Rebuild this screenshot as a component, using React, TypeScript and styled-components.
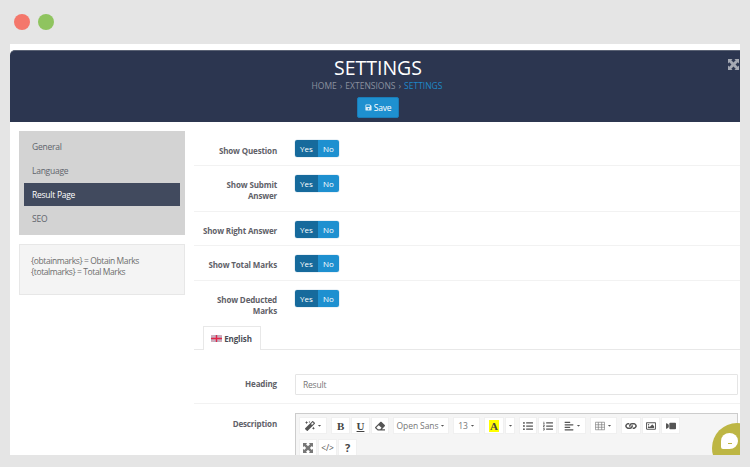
import React from 'react';
import styled, { createGlobalStyle } from 'styled-components';
import {
  FaMagic, FaEraser, FaListUl, FaListOl, FaAlignLeft, FaLink,
  FaRegImage, FaVideo, FaSave, FaCaretDown,
} from 'react-icons/fa';

const Global = createGlobalStyle`
  html, body { margin: 0; padding: 0; height: 467px; overflow: hidden; background: #e5e5e5; }
  body { font-family: "Open Sans", "Liberation Sans", sans-serif; }
  * { box-sizing: border-box; }
`;
const Page = styled.div`width: 750px; height: 467px; display: flex; flex-direction: column; padding: 14px 10px 12px;`;
const Lights = styled.div`display: flex; gap: 8px; height: 30px; padding-left: 4px; flex: none;`;
const Light = styled.span<{ $c: string }>`width: 16px; height: 16px; border-radius: 50%; background: ${p => p.$c};`;
const Frame = styled.div`position: relative; flex: 1; min-height: 0; background: #fff; overflow: hidden; padding-top: 6px;`;
const Header = styled.header`
  position: relative; height: 72px; padding-left: 6px; background: #2c3650; border-top: 1px solid #5a6274; border-top-left-radius: 5px;
  display: flex; flex-direction: column; align-items: center; color: #fff;
`;
const Title = styled.h1`margin: 4px 0 0; font-size: 19.5px; font-weight: 400; line-height: 25px;`;
const Crumbs = styled.div`font-size: 8.5px; line-height: 11px; color: #8b919f; display: flex; gap: 3px; margin-right: 2px;`;
const Current = styled.span`color: #1e88c8;`;
const SaveBtn = styled.button`
  margin-top: 6px; width: 42px; height: 21px; padding: 0; border: 1px solid #1a7cb8; border-radius: 2px; background: #1e90d0; color: #fff;
  font: 500 8.5px "Open Sans", sans-serif; letter-spacing: -.2px; display: flex; align-items: center; justify-content: center; gap: 2px;
  svg { width: 7px; height: 7px; opacity: .85; }
`;
const Expand = styled.span`position: absolute; top: 8px; right: 1px; color: #a5a9b3; display: flex;`;
const Body = styled.div`display: flex; padding: 9px 0 0 9px; gap: 9px;`;
const Side = styled.aside`width: 166px; flex: none; display: flex; flex-direction: column; gap: 9px;`;
const Nav = styled.nav`background: #d3d3d3; padding: 4px 5px 0; height: 104px; display: flex; flex-direction: column;`;
const NavItem = styled.div<{ $active?: boolean }>`
  height: 24px; padding-left: 8px; font-size: 8.5px; letter-spacing: -.25px; display: flex; align-items: center; border-bottom: 1px solid transparent; background-clip: padding-box;
  color: ${p => (p.$active ? '#fff' : '#60646c')};
  background-color: ${p => (p.$active ? '#414a5e' : 'transparent')};
`;
const Info = styled.div`height: 51px; background: #f4f4f4; border: 1px solid #e7e7e7; padding: 10px 11px; font-size: 8.5px; letter-spacing: -.4px; line-height: 11px; color: #6e6e6e;`;
const Main = styled.main`flex: 1; min-width: 0; display: flex; flex-direction: column;`;
const Row = styled.div<{ $h: number; $last?: boolean; $pad?: number }>`
  height: ${p => p.$h}px; padding-top: ${p => p.$pad ?? 9}px; display: flex; gap: 18px; align-items: flex-start; flex: none;
  border-bottom: ${p => (p.$last ? 'none' : '1px solid #f2f2f2')};
`;
const Label = styled.label<{ $top?: number }>`
  width: 83px; padding-left: 8px; flex: none; text-align: right; font-size: 8px; font-weight: 700; letter-spacing: -.15px; line-height: 11px; color: #5f6168; margin-top: ${p => p.$top ?? 4}px;
`;
const Toggle = styled.div`display: flex; height: 17px; width: 44px; border-radius: 2px; overflow: hidden; flex: none; box-shadow: 0 0 0 .5px #d8e6ef;`;
const Opt = styled.span<{ $on?: boolean }>`
  flex: ${p => (p.$on ? '0 0 23px' : 1)}; display: flex; align-items: center; justify-content: center; font-size: 8px; color: #fff;
  background: ${p => (p.$on ? '#166a9c' : '#1e90d0')};
`;
const Tabs = styled.div`height: 24px; margin: 10px 0 0; padding-left: 9px; border-bottom: 1px solid #e8e8e8; display: flex; flex: none;`;
const Tab = styled.div`
  width: 58px; height: 24px; padding-right: 1px; background: #fff; border: 1px solid #e8e8e8; border-bottom: none; display: flex; align-items: center; justify-content: center; gap: 2px;
  font-size: 8px; font-weight: 700; letter-spacing: -.1px; color: #4b4d55;
`;
const Input = styled.div`flex: 1; margin-right: 2px; height: 21px; border: 1px solid #e5e5e5; font-size: 8.5px; letter-spacing: -.2px; color: #777; padding-left: 7px; display: flex; align-items: center; border-radius: 1px;`;
const Editor = styled.div`flex: 1; margin-right: 2px; height: 60px; background: #f5f5f5; border: 1px solid #ccc; padding: 3px 0 0 3px; display: flex; flex-wrap: wrap; align-content: flex-start; column-gap: 4px; row-gap: 5px;`;
const Group = styled.div`display: flex; gap: 1px;`;
const Tool = styled.span<{ $w: number }>`
  width: ${p => p.$w}px; height: 17px; background: #fff; border: 1px solid #f0f0f0; display: flex; align-items: center; justify-content: center; gap: 2px; color: #555;
  font-size: 8.5px; letter-spacing: -.1px; svg { width: 10px; height: 10px; } svg.c { width: 5px; height: 5px; }
`;
const Muted = styled.span`color: #777;`;
const Serif = styled.span<{ $u?: boolean }>`
  font: 700 11px "Liberation Serif", serif; color: #444; text-decoration: ${p => (p.$u ? 'underline' : 'none')};
`;
const Heavy = styled.span`font-size: 11px; font-weight: 700; color: #444;`;
const HL = styled.span`background: #ffff00; width: 10px; height: 12px; font: 700 11px "Liberation Serif", serif; text-align: center; line-height: 12px; color: #444;`;
const LinkIcon = styled(FaLink)`transform: rotate(45deg);`;
const VideoIcon = styled(FaVideo)`transform: scaleX(-1);`;
const SoftIcon = styled.span`color: #777; display: flex;`;
const Chat = styled.div`position: absolute; left: 702px; top: 379px; width: 50px; height: 50px; border-radius: 50%; background: #bdb644;`;
const Speech = styled.div`
  position: absolute; left: 9px; top: 10px; width: 17px; height: 16px; background: #fff; border-radius: 50% 50% 50% 2px;
  &::after { content: ''; position: absolute; left: 7px; top: 10px; width: 4px; height: 1px; background: #bdb644; }
`;

const Flag = () => (
  <svg width="11" height="7" viewBox="0 0 11 7" aria-hidden>
    <rect width="11" height="7" fill="#b9b3c4" />
    <path d="M0 0L11 7M11 0L0 7" stroke="#e8a9b5" strokeWidth="1" />
    <path d="M5.5 0V7M0 3.5H11" stroke="#e0264a" strokeWidth="1.4" />
  </svg>
);
const ArrowsAlt = ({ size }: { size: number }) => (
  <svg width={size} height={size} viewBox="0 0 12 12" fill="currentColor" aria-hidden>
    <path d="M0 0H5L3.6 1.4L6 3.8L8.4 1.4L7 0H12V5L10.6 3.6L8.2 6L10.6 8.4L12 7V12H7L8.4 10.6L6 8.2L3.6 10.6L5 12H0V7L1.4 8.4L3.8 6L1.4 3.6L0 5Z" />
  </svg>
);
const Grid = () => (
  <svg viewBox="0 0 12 10" fill="none" stroke="#777" strokeWidth="0.8" aria-hidden>
    <path d="M.5.5H11.5V9.5H.5ZM.5 3.5H11.5M.5 6.5H11.5M4 .5V9.5M8 .5V9.5" />
  </svg>
);
const YesNo = () => (
  <Toggle>
    <Opt $on>Yes</Opt>
    <Opt>No</Opt>
  </Toggle>
);
const Caret = () => <FaCaretDown className="c" />;

export default function App() {
  return (
    <Page>
      <Global />
      <Lights>
        <Light $c="#f4776b" />
        <Light $c="#8fc45f" />
      </Lights>
      <Frame>
        <Header>
          <Title>SETTINGS</Title>
          <Crumbs>
            <span>HOME</span><span>›</span><span>EXTENSIONS</span><span>›</span><Current>SETTINGS</Current>
          </Crumbs>
          <SaveBtn><FaSave />Save</SaveBtn>
          <Expand><ArrowsAlt size={11} /></Expand>
        </Header>
        <Body>
          <Side>
            <Nav>
              <NavItem>General</NavItem>
              <NavItem>Language</NavItem>
              <NavItem $active>Result Page</NavItem>
              <NavItem>SEO</NavItem>
            </Nav>
            <Info>
              {'{obtainmarks} = Obtain Marks'}<br />
              {'{totalmarks} = Total Marks'}
            </Info>
          </Side>
          <Main>
            <Row $h={35}><Label $top={5}>Show Question</Label><YesNo /></Row>
            <Row $h={46}><Label>Show Submit Answer</Label><YesNo /></Row>
            <Row $h={34}><Label>Show Right Answer</Label><YesNo /></Row>
            <Row $h={35}><Label>Show Total Marks</Label><YesNo /></Row>
            <Row $h={35} $last><Label>Show Deducted Marks</Label><YesNo /></Row>
            <Tabs><Tab><Flag />English</Tab></Tabs>
            <Row $h={54} $pad={24}><Label $top={4}>Heading</Label><Input>Result</Input></Row>
            <Row $h={60} $last $pad={9}>
              <Label $top={5}>Description</Label>
              <Editor>
                <Group><Tool $w={28}><FaMagic /><Caret /></Tool></Group>
                <Group>
                  <Tool $w={19}><Serif>B</Serif></Tool>
                  <Tool $w={19}><Serif $u>U</Serif></Tool>
                  <Tool $w={18}><FaEraser /></Tool>
                </Group>
                <Group><Tool $w={56}><Muted>Open Sans</Muted><Caret /></Tool></Group>
                <Group><Tool $w={27}><Muted>13</Muted><Caret /></Tool></Group>
                <Group>
                  <Tool $w={20}><HL>A</HL></Tool>
                  <Tool $w={10}><Caret /></Tool>
                </Group>
                <Group>
                  <Tool $w={18}><FaListUl /></Tool>
                  <Tool $w={19}><FaListOl /></Tool>
                  <Tool $w={28}><FaAlignLeft /><Caret /></Tool>
                </Group>
                <Group><Tool $w={27}><Grid /><Caret /></Tool></Group>
                <Group>
                  <Tool $w={20}><LinkIcon /></Tool>
                  <Tool $w={18}><FaRegImage /></Tool>
                  <Tool $w={19}><VideoIcon /></Tool>
                </Group>
                <Group>
                  <Tool $w={18}><SoftIcon><ArrowsAlt size={10} /></SoftIcon></Tool>
                  <Tool $w={19}>{'</>'}</Tool>
                  <Tool $w={19}><Heavy>?</Heavy></Tool>
                </Group>
              </Editor>
            </Row>
          </Main>
        </Body>
        <Chat><Speech /></Chat>
      </Frame>
    </Page>
  );
}
